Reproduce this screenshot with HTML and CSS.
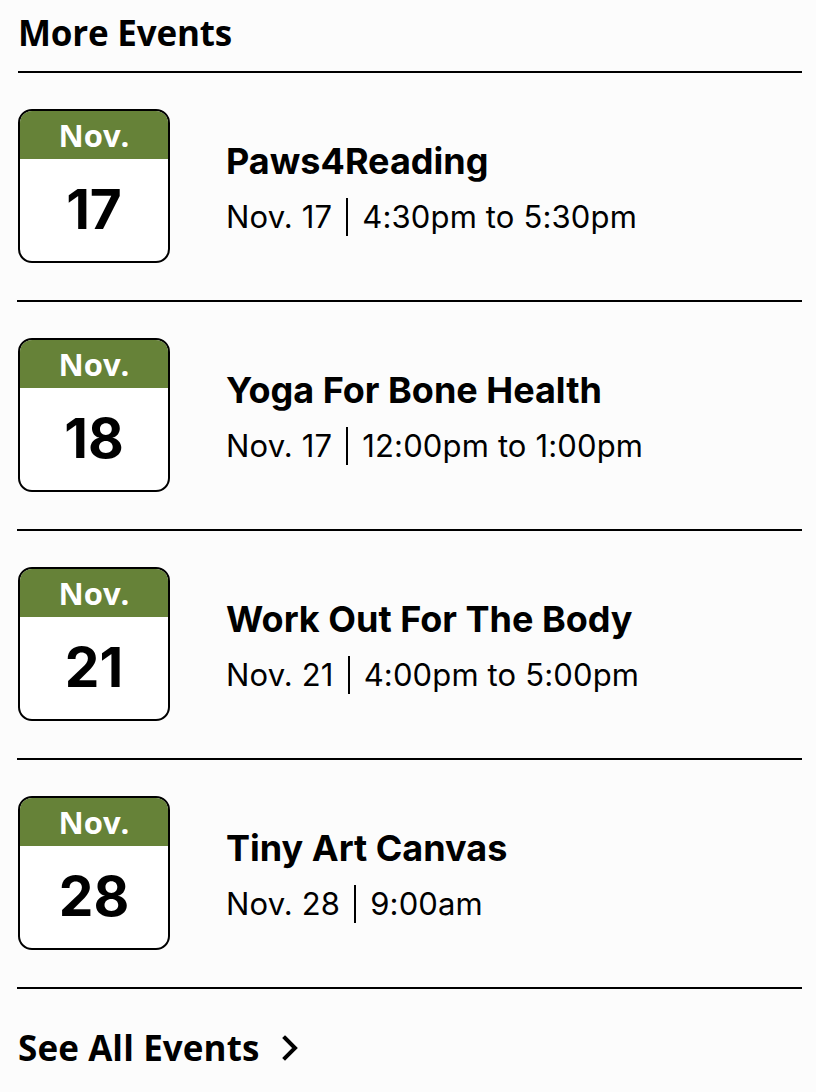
FILE: index.html
```html
<!DOCTYPE html>
<html>
<head>
<meta charset="utf-8">
<link rel="stylesheet" href="styles.css">
</head>
<body>
<section class="events">
  <h2 class="heading">More Events</h2>
  <ul class="list">
    <li class="event">
      <div class="cal"><div class="cal-month">Nov.</div><div class="cal-day">17</div></div>
      <div class="info">
        <h3 class="title">Paws4Reading</h3>
        <p class="when"><span>Nov. 17</span><span class="sep"></span><span>4:30pm to 5:30pm</span></p>
      </div>
    </li>
    <li class="event">
      <div class="cal"><div class="cal-month">Nov.</div><div class="cal-day">18</div></div>
      <div class="info">
        <h3 class="title">Yoga For Bone Health</h3>
        <p class="when"><span>Nov. 17</span><span class="sep"></span><span>12:00pm to 1:00pm</span></p>
      </div>
    </li>
    <li class="event">
      <div class="cal"><div class="cal-month">Nov.</div><div class="cal-day">21</div></div>
      <div class="info">
        <h3 class="title">Work Out For The Body</h3>
        <p class="when"><span>Nov. 21</span><span class="sep"></span><span>4:00pm to 5:00pm</span></p>
      </div>
    </li>
    <li class="event">
      <div class="cal"><div class="cal-month">Nov.</div><div class="cal-day">28</div></div>
      <div class="info">
        <h3 class="title">Tiny Art Canvas</h3>
        <p class="when"><span>Nov. 28</span><span class="sep"></span><span>9:00am</span></p>
      </div>
    </li>
  </ul>
  <a class="all" href="#">See All Events
    <svg class="chev" width="20" height="28" viewBox="0 0 20 28"><path d="M5 4 L15 14 L5 24" fill="none" stroke="#000" stroke-width="4" stroke-linecap="square"/></svg>
  </a>
</section>
</body>
</html>
```

FILE: styles.css
```css
* { box-sizing: border-box; }
html, body { margin: 0; padding: 0; background: #fcfcfc; }
body { font-family: Inter, "Liberation Sans", sans-serif; color: #000; }

.events {
  margin-left: 17px;
  width: 785px;
  padding-top: 11px;
}

.heading {
  font-family: "Open Sans", Lato, sans-serif;
  font-weight: 700;
  font-size: 35px;
  line-height: 44px;
  margin: 0 0 0 1px;
  letter-spacing: -0.2px;
  padding-bottom: 16px;
  border-bottom: 2px solid #000;
}

.list { list-style: none; margin: 0; padding: 0; }

.event {
  display: flex;
  align-items: center;
  padding: 36px 0 38px 1px;
  border-bottom: 2px solid #000;
  height: 229px;
}

.cal {
  width: 152px;
  height: 154px;
  border: 2px solid #000;
  border-radius: 14px;
  background: #fff;
  overflow: hidden;
  flex: none;
  display: flex;
  flex-direction: column;
}

.cal-month {
  background: #668238;
  color: #fff;
  height: 50px;
  margin: -2px -2px 0;
  font-family: "Open Sans", Lato, sans-serif;
  font-weight: 700;
  font-size: 31px;
  line-height: 52px;
  text-align: center;
}

.cal-day {
  flex: 1;
  display: flex;
  align-items: center;
  justify-content: center;
  font-weight: 700;
  font-size: 55px;
  padding-bottom: 2px;
}

.info { margin-left: 56px; padding-top: 4px; }

.title {
  margin: 0;
  font-weight: 700;
  font-size: 36px;
  line-height: 42px;
}

.when {
  margin: 16px 0 0;
  font-size: 31px;
  line-height: 38px;
  letter-spacing: 0.15px;
  display: flex;
  align-items: center;
}

.sep {
  display: inline-block;
  width: 2px;
  height: 38px;
  background: #000;
  margin: 0 14px 0 14px;
}

.all {
  display: inline-flex;
  align-items: center;
  gap: 20px;
  margin: 35px 0 0 1px;
  font-family: "Open Sans", Lato, sans-serif;
  font-weight: 700;
  font-size: 35px;
  letter-spacing: 0.1px;
  color: #000;
  text-decoration: none;
}
.chev { display: block; }
```
